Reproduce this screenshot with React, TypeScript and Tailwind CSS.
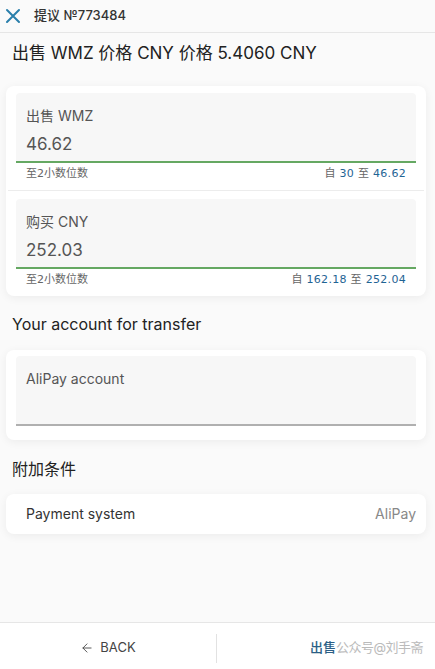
import { ArrowLeft } from 'lucide-react';

const sans = "font-['Inter','Noto_Sans_CJK_SC',sans-serif]";

function Field({ label, value, from, to, underline }: { label: string; value?: string; from?: string; to?: string; underline: string }) {
  return (
    <div className="px-[10px]">
      <div className="bg-[#f7f7f7] rounded-t-[4px] px-[10px] pt-[14px] h-[68px]">
        <div className="text-[14px] leading-[18px] text-[#555]">{label}</div>
        {value && <div className="mt-[9px] text-[17px] leading-[20px] text-[#555]">{value}</div>}
      </div>
      <div className={underline} />
      {from && (
        <div className="flex justify-between px-[10px] pt-[3px] h-[22px] text-[11px] leading-[16px] text-[#666] font-['DejaVu_Sans','Noto_Sans_CJK_SC',sans-serif]">
          <span>至2小数位数</span>
          <span className="tracking-[0.3px]">
            自 <span className="text-[#1f6494]">{from}</span> 至 <span className="text-[#1f6494]">{to}</span>
          </span>
        </div>
      )}
    </div>
  );
}

export default function App() {
  return (
    <div className={`${sans} w-[435px] h-[669px] bg-[#fafafa] flex flex-col text-[#222]`}>
      {/* Header */}
      <div className="h-[33px] flex items-center border-b border-[#e6e6e6] bg-[#fafafa]">
        <svg className="ml-[5px] w-[16px] h-[16px]" viewBox="0 0 16 16" fill="none" stroke="#2a7fab" strokeWidth="2" strokeLinecap="round">
          <path d="M2 2L14 14M14 2L2 14" />
        </svg>
        <span className="ml-[13px] text-[13px] font-medium text-[#333]">提议 №773484</span>
      </div>

      <div className="flex-1 flex flex-col">
        <h1 className="px-[12px] pt-[9px] h-[53px] text-[17px] leading-[22px] text-[#222]">出售 WMZ 价格 CNY 价格 5.4060 CNY</h1>

        {/* Amount card */}
        <div className="ml-[6px] mr-[9px] bg-white rounded-[8px] shadow-[0_2px_10px_rgba(0,0,0,0.06)] pt-[7px] pb-[5px]">
          <Field label="出售 WMZ" value="46.62" from="30" to="46.62" underline="h-[2px] bg-[#65a862]" />
          <div className="mx-[2px] mt-[5px] mb-[8px] h-px bg-[#ececec]" />
          <Field label="购买 CNY" value="252.03" from="162.18" to="252.04" underline="h-[2px] bg-[#65a862]" />
        </div>

        <h2 className="px-[12px] pt-[17px] h-[54px] text-[16px] leading-[22px] text-[#222]">Your account for transfer</h2>

        {/* Account card */}
        <div className="ml-[6px] mr-[9px] bg-white rounded-[8px] shadow-[0_2px_10px_rgba(0,0,0,0.06)] pt-[6px] pb-[14px]">
          <Field label="AliPay account" underline="h-[1.5px] bg-[#b0b0b0]" />
        </div>

        <h2 className="px-[12px] pt-[18px] h-[54px] text-[16px] leading-[22px] text-[#222]">附加条件</h2>

        {/* Conditions card */}
        <div className="ml-[6px] mr-[9px] h-[40px] bg-white rounded-[8px] shadow-[0_2px_10px_rgba(0,0,0,0.06)] flex items-center justify-between pl-[20px] pr-[10px] text-[14px]">
          <span className="text-[#333]">Payment system</span>
          <span className="text-[#888]">AliPay</span>
        </div>
      </div>

      {/* Bottom bar */}
      <div className="h-[47px] border-t border-[#e6e6e6] bg-white flex items-center pt-[4px]">
        <button className="w-[216px] flex items-center justify-center gap-[6px] text-[13px] text-[#444]">
          <ArrowLeft className="w-[14px] h-[14px]" strokeWidth={1.5} />
          BACK
        </button>
        <div className="w-px h-[29px] bg-[#e2e2e2]" />
        <div className="flex-1 min-w-0 flex items-center justify-end pr-[12px] text-[13px] whitespace-nowrap">
          <span className="text-[#2c5f86] font-medium">出售</span>
          <span className="text-[#bbb] tracking-[-0.5px]">公众号@刘手斋</span>
        </div>
      </div>
    </div>
  );
}
